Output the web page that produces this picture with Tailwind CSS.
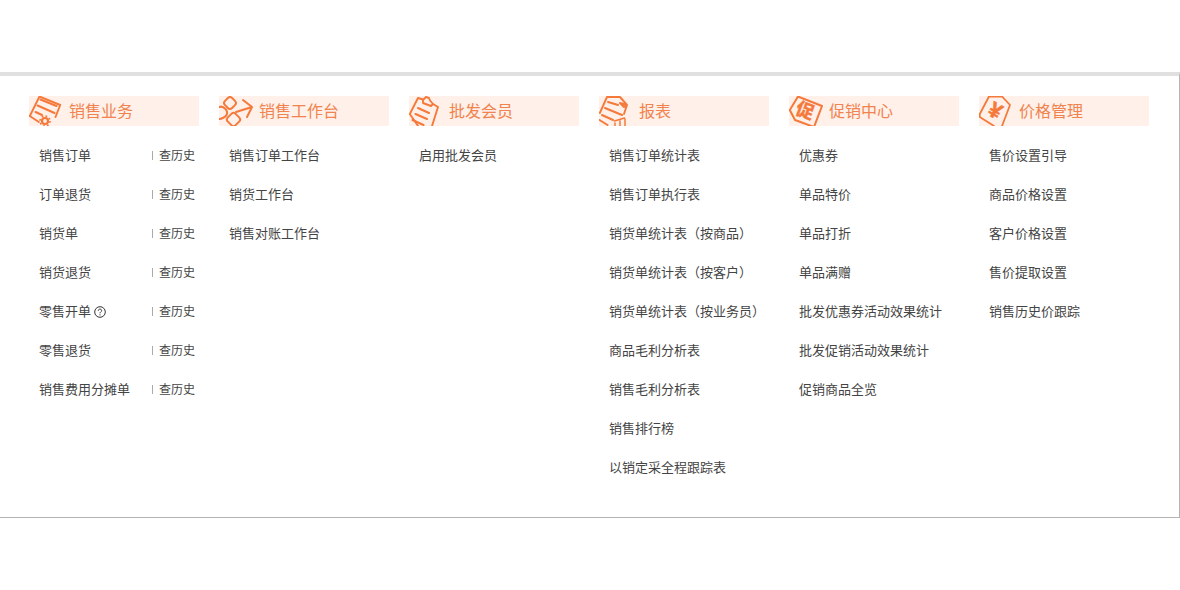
<!DOCTYPE html>
<html lang="en">
<head>
  <meta charset="UTF-8">
  <title>销售</title>
  <script src="https://cdn.jsdelivr.net/npm/@tailwindcss/browser@4"></script>
</head>
<body class="bg-white font-['Liberation_Sans','Noto_Sans_CJK_SC',sans-serif]">
  <div class="pt-[72px]">
    <div class="h-[446px] border-t-4 border-t-[#e0e0e0] border-r border-r-[#b4b4b4] border-b border-b-[#b4b4b4] pt-5 pl-[29px] flex gap-5">

      <!-- 销售业务 -->
      <div class="w-[170px]">
        <div class="h-[30px] bg-[#fff0e9] flex items-center overflow-hidden">
          <svg class="w-8 h-[30px] shrink-0 overflow-visible text-[#f5793a]" viewBox="0 0 32 30" fill="none" stroke="currentColor" stroke-width="1.900" stroke-linecap="round" stroke-linejoin="round">
            <path d="M.8 20 10.500 .5 31.200 9 26.500 21"/>
            <path d="M.8 20l9 6"/>
            <path d="M11.500 3.500l16 6.500M8.500 9.500l17 7.500M6.500 16l6.500 3" stroke-width="2"/>
            <circle cx="16" cy="25" r="3" stroke-width="2.200"/>
            <circle cx="16" cy="25" r="5" stroke-width="1.600" stroke-dasharray="1.800 2.100" stroke-linecap="butt"/>
          </svg>
          <span class="ml-2 mt-px text-base text-[#f0834e]">销售业务</span>
        </div>
        <ul class="mt-2.5 text-[13px] text-[#444]">
          <li class="h-[39px] pl-2.5 flex items-center justify-between pr-1"><span>销售订单</span><span class="flex items-center text-xs"><i class="w-px h-[9px] bg-[#aaa] mr-1.5"></i>查历史</span></li>
          <li class="h-[39px] pl-2.5 flex items-center justify-between pr-1"><span>订单退货</span><span class="flex items-center text-xs"><i class="w-px h-[9px] bg-[#aaa] mr-1.5"></i>查历史</span></li>
          <li class="h-[39px] pl-2.5 flex items-center justify-between pr-1"><span>销货单</span><span class="flex items-center text-xs"><i class="w-px h-[9px] bg-[#aaa] mr-1.5"></i>查历史</span></li>
          <li class="h-[39px] pl-2.5 flex items-center justify-between pr-1"><span>销货退货</span><span class="flex items-center text-xs"><i class="w-px h-[9px] bg-[#aaa] mr-1.5"></i>查历史</span></li>
          <li class="h-[39px] pl-2.5 flex items-center justify-between pr-1">
            <span class="flex items-center">零售开单
              <svg class="w-3 h-3 ml-[3px]" viewBox="0 0 12 12" fill="none" stroke="#333"><circle cx="6" cy="6" r="5.300"/><path d="M4.300 4.800C4.300 3.700 5.100 3.100 6 3.100s1.700.6 1.700 1.500C7.700 5.800 6 5.800 6 7.300"/><path d="M6 8.300v1.100"/></svg>
            </span>
            <span class="flex items-center text-xs"><i class="w-px h-[9px] bg-[#aaa] mr-1.5"></i>查历史</span>
          </li>
          <li class="h-[39px] pl-2.5 flex items-center justify-between pr-1"><span>零售退货</span><span class="flex items-center text-xs"><i class="w-px h-[9px] bg-[#aaa] mr-1.5"></i>查历史</span></li>
          <li class="h-[39px] pl-2.5 flex items-center justify-between pr-1"><span>销售费用分摊单</span><span class="flex items-center text-xs"><i class="w-px h-[9px] bg-[#aaa] mr-1.5"></i>查历史</span></li>
        </ul>
      </div>

      <!-- 销售工作台 -->
      <div class="w-[170px]">
        <div class="h-[30px] bg-[#fff0e9] flex items-center overflow-hidden">
          <svg class="w-8 h-[30px] shrink-0 overflow-visible text-[#f5793a]" viewBox="0 0 32 30" fill="none" stroke="currentColor" stroke-width="2" stroke-linecap="round" stroke-linejoin="round">
            <rect x="6" y="2" width="10" height="10" rx="3" transform="rotate(45 11 7)"/>
            <path d="M.5 11c2-1 4 0 6 2s2 4 1 6-5 4-7 4"/>
            <rect x="9" y="18" width="11" height="11" rx="3" transform="rotate(45 14.500 23.500)"/>
            <path d="M17 16 33 11M24 4l9 7-5 10"/>
          </svg>
          <span class="ml-2 mt-px text-base text-[#f0834e]">销售工作台</span>
        </div>
        <ul class="mt-2.5 text-[13px] text-[#444]">
          <li class="h-[39px] pl-2.5 flex items-center">销售订单工作台</li>
          <li class="h-[39px] pl-2.5 flex items-center">销货工作台</li>
          <li class="h-[39px] pl-2.5 flex items-center">销售对账工作台</li>
        </ul>
      </div>

      <!-- 批发会员 -->
      <div class="w-[170px]">
        <div class="h-[30px] bg-[#fff0e9] flex items-center overflow-hidden">
          <svg class="w-8 h-[30px] shrink-0 overflow-visible text-[#f5793a]" viewBox="0 0 32 30" fill="none" stroke="currentColor" stroke-width="1.900" stroke-linecap="round" stroke-linejoin="round">
            <path d="M.8 18 9 2l5 1.500M24 8l5 3-6 19M.8 18l9 13"/>
            <path d="M14 4l3-3 3 1 1 2.500 3 3.500-2 2-8-3Z"/>
            <path d="M9 12l11 5M6.500 18l11.500 5M3.500 24l11 5" stroke-width="2"/>
          </svg>
          <span class="ml-2 mt-px text-base text-[#f0834e]">批发会员</span>
        </div>
        <ul class="mt-2.5 text-[13px] text-[#444]">
          <li class="h-[39px] pl-2.5 flex items-center">启用批发会员</li>
        </ul>
      </div>

      <!-- 报表 -->
      <div class="w-[170px]">
        <div class="h-[30px] bg-[#fff0e9] flex items-center overflow-hidden">
          <svg class="w-8 h-[30px] shrink-0 overflow-visible text-[#f5793a]" viewBox="0 0 32 30" fill="none" stroke="currentColor" stroke-width="1.900" stroke-linecap="round" stroke-linejoin="round">
            <path d="M.8 17 8 1h13l7 8-3 9M21 7l7 2-3 2Z"/>
            <path d="M9 6l10 3M6 12l17 7M3 19l11 5M.5 24l8 5" stroke-width="2"/>
            <path d="M16 30v-3M21 30v-5M26 30v-7M15.500 25l10-3" stroke-width="1.500"/>
          </svg>
          <span class="ml-2 mt-px text-base text-[#f0834e]">报表</span>
        </div>
        <ul class="mt-2.5 text-[13px] text-[#444]">
          <li class="h-[39px] pl-2.5 flex items-center">销售订单统计表</li>
          <li class="h-[39px] pl-2.5 flex items-center">销售订单执行表</li>
          <li class="h-[39px] pl-2.5 flex items-center">销货单统计表（按商品）</li>
          <li class="h-[39px] pl-2.5 flex items-center">销货单统计表（按客户）</li>
          <li class="h-[39px] pl-2.5 flex items-center">销货单统计表（按业务员）</li>
          <li class="h-[39px] pl-2.5 flex items-center">商品毛利分析表</li>
          <li class="h-[39px] pl-2.5 flex items-center">销售毛利分析表</li>
          <li class="h-[39px] pl-2.5 flex items-center">销售排行榜</li>
          <li class="h-[39px] pl-2.5 flex items-center">以销定采全程跟踪表</li>
        </ul>
      </div>

      <!-- 促销中心 -->
      <div class="w-[170px]">
        <div class="h-[30px] bg-[#fff0e9] flex items-center overflow-hidden">
          <svg class="w-8 h-[30px] shrink-0 overflow-visible text-[#f5793a]" viewBox="0 0 32 30" fill="none" stroke="currentColor" stroke-width="2" stroke-linecap="round" stroke-linejoin="round">
            <path d="M.8 14 9 .5 33 10 25 31 6 24Z"/>
            <text x="16" y="21" font-size="18" font-weight="700" fill="currentColor" stroke="currentColor" stroke-width=".5" text-anchor="middle" transform="rotate(20 16 15)">促</text>
          </svg>
          <span class="ml-2 mt-px text-base text-[#f0834e]">促销中心</span>
        </div>
        <ul class="mt-2.5 text-[13px] text-[#444]">
          <li class="h-[39px] pl-2.5 flex items-center">优惠券</li>
          <li class="h-[39px] pl-2.5 flex items-center">单品特价</li>
          <li class="h-[39px] pl-2.5 flex items-center">单品打折</li>
          <li class="h-[39px] pl-2.5 flex items-center">单品满赠</li>
          <li class="h-[39px] pl-2.5 flex items-center">批发优惠券活动效果统计</li>
          <li class="h-[39px] pl-2.5 flex items-center">批发促销活动效果统计</li>
          <li class="h-[39px] pl-2.5 flex items-center">促销商品全览</li>
        </ul>
      </div>

      <!-- 价格管理 -->
      <div class="w-[170px]">
        <div class="h-[30px] bg-[#fff0e9] flex items-center overflow-hidden">
          <svg class="w-8 h-[30px] shrink-0 overflow-visible text-[#f5793a]" viewBox="0 0 32 30" fill="none" stroke="currentColor" stroke-width="1.800" stroke-linecap="round" stroke-linejoin="round">
            <path d="M.8 18 10 .5h13L31 9 23 30M.8 18v3L15 30"/>
            <text x="16" y="22" font-size="22" font-weight="700" fill="currentColor" stroke="currentColor" stroke-width=".6" text-anchor="middle" transform="rotate(30 16 15)">¥</text>
          </svg>
          <span class="ml-2 mt-px text-base text-[#f0834e]">价格管理</span>
        </div>
        <ul class="mt-2.5 text-[13px] text-[#444]">
          <li class="h-[39px] pl-2.5 flex items-center">售价设置引导</li>
          <li class="h-[39px] pl-2.5 flex items-center">商品价格设置</li>
          <li class="h-[39px] pl-2.5 flex items-center">客户价格设置</li>
          <li class="h-[39px] pl-2.5 flex items-center">售价提取设置</li>
          <li class="h-[39px] pl-2.5 flex items-center">销售历史价跟踪</li>
        </ul>
      </div>

    </div>
  </div>
</body>
</html>
